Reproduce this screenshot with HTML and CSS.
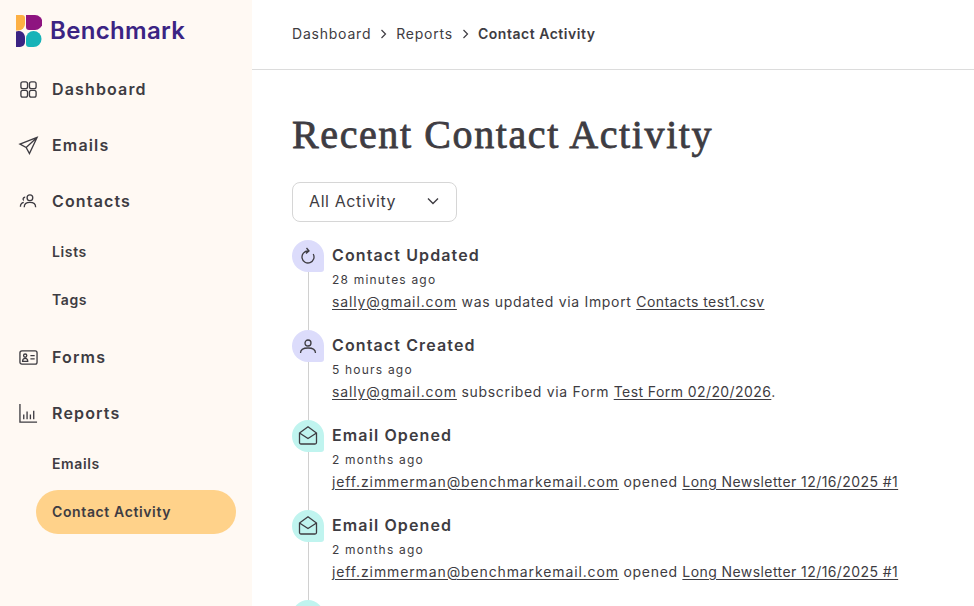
FILE: index.html
```html
<!DOCTYPE html>
<html lang="en">
<head>
<meta charset="utf-8">
<title>Recent Contact Activity</title>
<link rel="stylesheet" href="styles.css">
</head>
<body>
<div class="app">
  <aside class="sidebar">
    <div class="brand">
      <svg class="brand-mark" viewBox="0 0 26 32" width="26" height="32">
        <path fill="#fdb044" d="M0 0h6a3 3 0 0 1 3 3v6a6.500 6.500 0 0 1-6.500 6.500H0z"/>
        <path fill="#8e1480" d="M10 0h9a7.500 7.500 0 0 1 0 15h-6a3 3 0 0 1-3-3z"/>
        <path fill="#3b2483" d="M0 16.500a6.500 6.500 0 0 1 9 6V27a5 5 0 0 1-5 5H0z"/>
        <path fill="#17b3b8" d="M17.500 16a8 8 0 0 1 0 16H13a3 3 0 0 1-3-3v-5.500a7.500 7.500 0 0 1 7.500-7.500z"/>
      </svg>
      <span class="brand-name">Benchmark</span>
    </div>
    <nav class="nav">
      <a class="nav-item">
        <svg class="nav-icon" viewBox="0 0 20 20"><rect x="2" y="2" width="7" height="7" rx="2"/><rect x="11" y="2" width="7" height="7" rx="2"/><rect x="2" y="11" width="7" height="7" rx="2"/><rect x="11" y="11" width="7" height="7" rx="2"/></svg>
        <span>Dashboard</span>
      </a>
      <a class="nav-item">
        <svg class="nav-icon" viewBox="0 0 20 20"><path d="M19 1.500 1 8.500l6.500 3.500 3.500 6.500zM19 1.500 7.500 12"/></svg>
        <span>Emails</span>
      </a>
      <a class="nav-item">
        <svg class="nav-icon" viewBox="0 0 20 20"><circle cx="11.500" cy="6" r="3"/><path d="M5.500 16c0-3 2.500-5 6-5s6 2 6 5M6.500 5.500a2 2 0 0 0-1.500 3.500M1.500 15.500c0-2.500 1.200-4 3.500-4.500"/></svg>
        <span>Contacts</span>
      </a>
      <div class="subnav">
        <a class="sub-item">Lists</a>
        <a class="sub-item">Tags</a>
      </div>
      <a class="nav-item">
        <svg class="nav-icon" viewBox="0 0 20 20"><rect x="1" y="3" width="18" height="14" rx="2"/><circle cx="6.500" cy="8" r="1.700"/><path d="M3.800 14c0-2 1.200-3 2.700-3s2.700 1 2.700 3zM12 8h4.500M12 11.500h4.500"/></svg>
        <span>Forms</span>
      </a>
      <a class="nav-item">
        <svg class="nav-icon" viewBox="0 0 20 20"><path d="M1 0v19h18M5 11v5M8.500 8v8M12 11v5M15.500 7v9"/></svg>
        <span>Reports</span>
      </a>
      <div class="subnav">
        <a class="sub-item">Emails</a>
        <a class="sub-item active">Contact Activity</a>
      </div>
    </nav>
  </aside>
  <main class="main">
    <header class="topbar">
      <span>Dashboard</span>
      <svg class="crumb-sep" viewBox="0 0 9 10"><path d="M2.500 1l4 4-4 4"/></svg>
      <span>Reports</span>
      <svg class="crumb-sep" viewBox="0 0 9 10"><path d="M2.500 1l4 4-4 4"/></svg>
      <strong>Contact Activity</strong>
    </header>
    <section class="content">
      <h1 class="title">Recent Contact Activity</h1>
      <div class="select">
        <span>All Activity</span>
        <svg class="select-caret" viewBox="0 0 12 8"><path d="M1 1.500l5 5 5-5"/></svg>
      </div>
      <ol class="timeline">
        <li class="event">
          <div class="badge badge-purple">
            <svg viewBox="0 0 20 20"><path d="M10 5A6 6 0 1 0 15.200 8M8.500 2 11 5 8 7.500"/></svg>
          </div>
          <div class="event-body">
            <h2>Contact Updated</h2>
            <p class="when">28 minutes ago</p>
            <p class="what"><a class="email">sally@gmail.com</a> was updated via Import <a class="doc">Contacts test1.csv</a></p>
          </div>
        </li>
        <li class="event">
          <div class="badge badge-purple">
            <svg viewBox="0 0 20 20"><circle cx="10" cy="7" r="3"/><path d="M2.500 17c0-3 3-5 7.500-5s7.500 2 7.500 5"/></svg>
          </div>
          <div class="event-body">
            <h2>Contact Created</h2>
            <p class="when">5 hours ago</p>
            <p class="what"><a class="email">sally@gmail.com</a> subscribed via Form <a class="doc">Test Form 02/20/2026</a>.</p>
          </div>
        </li>
        <li class="event">
          <div class="badge badge-teal">
            <svg viewBox="0 0 20 20"><path d="M1.500 7 10 .8 18.500 7v9.500A1.500 1.500 0 0 1 17 18H3a1.500 1.500 0 0 1-1.500-1.500zM1.500 7l8.500 5.500L18.500 7"/></svg>
          </div>
          <div class="event-body">
            <h2>Email Opened</h2>
            <p class="when">2 months ago</p>
            <p class="what"><a class="email">jeff.zimmerman@benchmarkemail.com</a> opened <a class="doc">Long Newsletter 12/16/2025 #1</a></p>
          </div>
        </li>
        <li class="event">
          <div class="badge badge-teal">
            <svg viewBox="0 0 20 20"><path d="M1.500 7 10 .8 18.500 7v9.500A1.500 1.500 0 0 1 17 18H3a1.500 1.500 0 0 1-1.500-1.500zM1.500 7l8.500 5.500L18.500 7"/></svg>
          </div>
          <div class="event-body">
            <h2>Email Opened</h2>
            <p class="when">2 months ago</p>
            <p class="what"><a class="email">jeff.zimmerman@benchmarkemail.com</a> opened <a class="doc">Long Newsletter 12/16/2025 #1</a></p>
          </div>
        </li>
        <li class="event">
          <div class="badge badge-teal"></div>
        </li>
      </ol>
    </section>
  </main>
</div>
</body>
</html>
```
FILE: styles.css
```css
* { box-sizing: border-box; }
html, body { margin: 0; height: 606px; overflow: hidden; }
body { font-family: "Inter", "Liberation Sans", sans-serif; color: #3e3c42; background: #fff; }
.app { display: flex; height: 606px; }

.sidebar { width: 252px; flex: none; background: #fff9f3; }
.brand { display: flex; align-items: center; gap: 8px; height: 61px; padding: 0 0 1px 16px; }
.brand-mark { flex: none; margin-top: 1px; }
.brand-name { font-size: 24px; font-weight: 600; color: #3b2483; letter-spacing: 0.33px; }
.nav { display: flex; flex-direction: column; }
.nav-item { display: flex; align-items: center; gap: 14px; height: 56px; padding-left: 19px; font-size: 16px; font-weight: 600; letter-spacing: 1.15px; }
.nav-icon { width: 19px; height: 19px; flex: none; fill: none; stroke: #3e3c42; stroke-width: 1.4; overflow: visible; }
.subnav { display: flex; flex-direction: column; gap: 4px; margin: 1px 16px 7px 36px; }
.sub-item { display: flex; align-items: center; height: 44px; padding: 0 0 2px 16px; border-radius: 22px; font-size: 14px; font-weight: 600; letter-spacing: 0.62px; }
.sub-item.active { background: #ffd28a; }
.subnav:last-child { margin-bottom: 0; }

.main { flex: 1; min-width: 0; height: 606px; overflow: hidden; }
.topbar { display: flex; align-items: center; gap: 8px; height: 70px; padding: 0 40px 2px; border-bottom: 1px solid #dcdcdc; font-size: 14px; letter-spacing: 0.78px; }
.topbar strong { font-weight: 600; letter-spacing: 0.52px; }
.crumb-sep { width: 9px; height: 10px; fill: none; stroke: #3e3c42; stroke-width: 1.2; }
.content { padding: 40px 0 0 40px; }
.title { margin: 0; font-family: "Liberation Serif", serif; font-size: 40px; line-height: 50px; font-weight: 400; letter-spacing: 1.6px; -webkit-text-stroke: 0.8px #3e3c42; }
.select { display: flex; align-items: center; justify-content: space-between; width: 165px; height: 40px; margin-top: 22px; padding: 0 17px 2px 16px; border: 1px solid #d6d6d6; border-radius: 8px; font-size: 16px; letter-spacing: 0.6px; }
.select-caret { width: 12px; height: 8px; fill: none; stroke: #3e3c42; stroke-width: 1.4; }

.timeline { list-style: none; margin: 18px 0 0; padding: 0; }
.event { display: flex; gap: 8px; height: 90px; position: relative; }
.event::before { content: ""; position: absolute; left: 16px; top: 32px; bottom: 0; width: 1px; background: #d0d0d0; }
.badge { width: 32px; height: 32px; flex: none; display: flex; align-items: center; justify-content: center; border-radius: 16px 16px 3px 16px; }
.badge svg { width: 20px; height: 20px; fill: none; stroke: #3e3c42; stroke-width: 1.3; overflow: visible; }
.badge-purple { background: #dcdcfb; }
.badge-teal { background: #c0f4ef; }
.event-body { min-width: 0; }
.event-body h2 { margin: 0 0 1px; font-size: 16px; line-height: 30px; font-weight: 600; letter-spacing: 1.12px; }
.when { margin: 0; font-size: 12px; line-height: 18px; letter-spacing: 1.2px; }
.what { margin: 0; font-size: 14px; line-height: 26px; letter-spacing: 0.68px; }
.what a { text-decoration: underline; text-underline-offset: 2px; }
.what .email { letter-spacing: 0.88px; }
.what .doc { letter-spacing: 0.42px; }
```
